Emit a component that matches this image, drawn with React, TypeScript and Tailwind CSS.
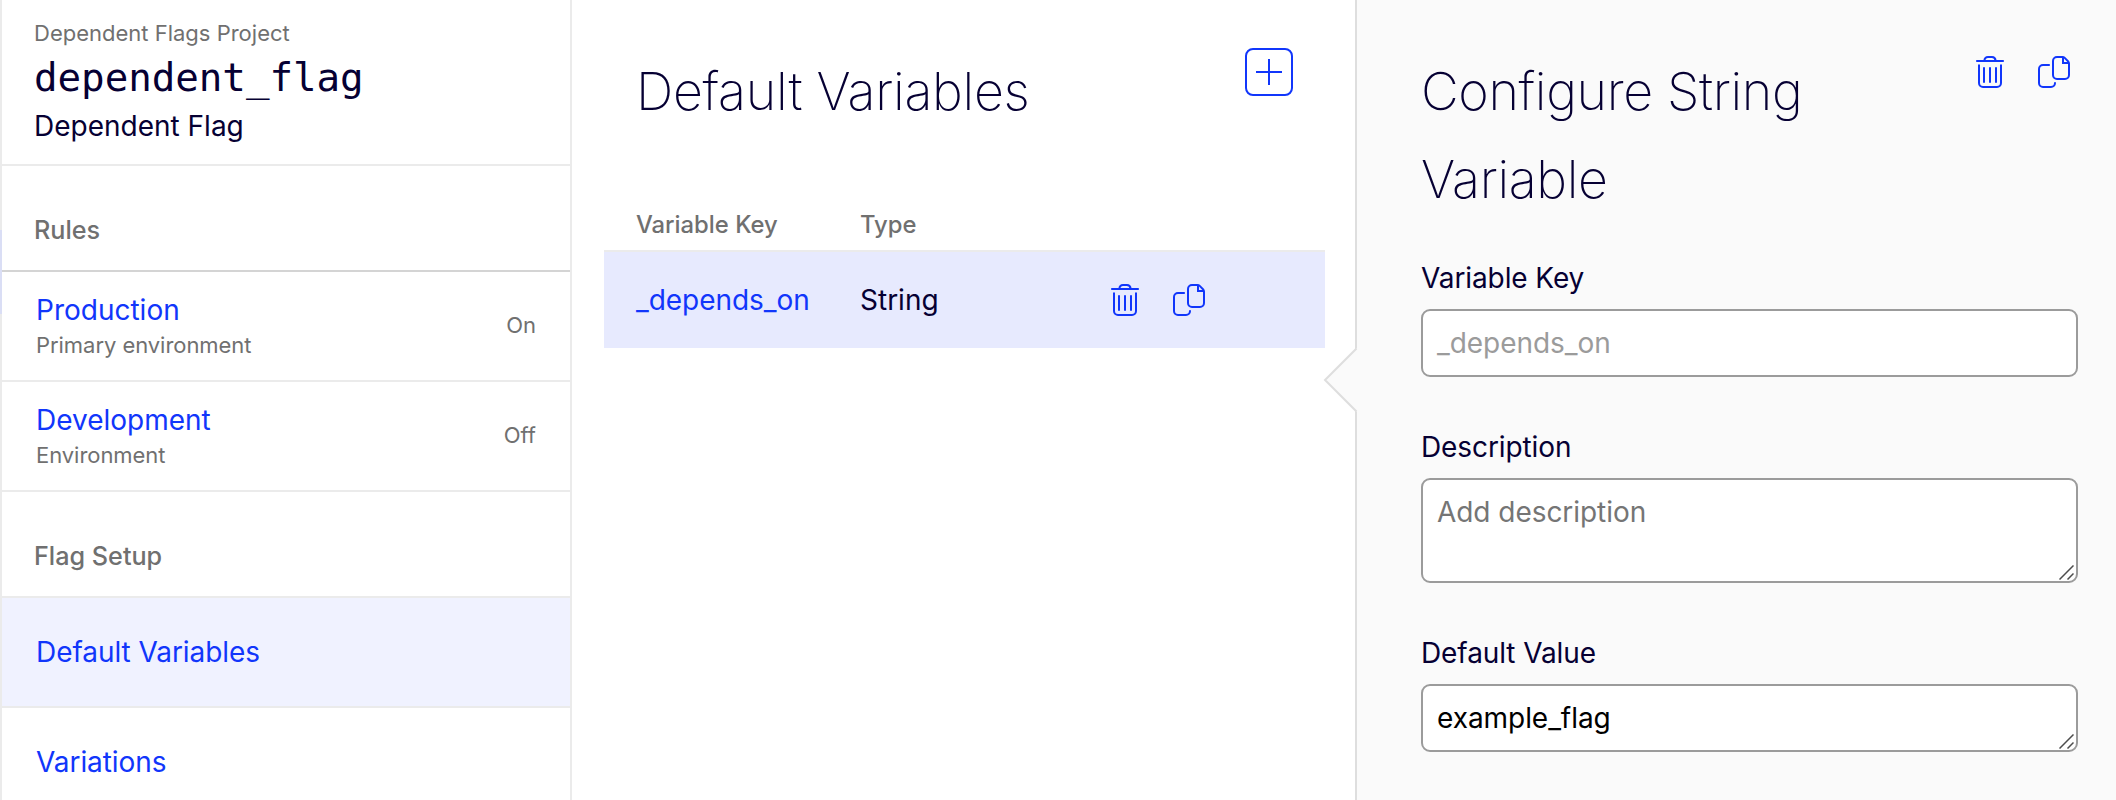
import type { ReactNode } from 'react'

function TrashIcon() {
  return (
    <svg width="32" height="32" viewBox="0 0 32 32" fill="none" stroke="currentColor" strokeWidth="2">
      <path d="M2.2 5H29.8" />
      <path d="M10.4 4.6C10.6 2.4 11.8 1 14 1h4c2.200 0 3.400 1.400 3.600 3.600" />
      <path d="M5 8.500V27a4 4 0 0 0 4 4H23a4 4 0 0 0 4-4V8.500" />
      <path d="M10 11.300V26.800M16 11.300V26.800M22 11.300V26.800" />
    </svg>
  )
}

function CopyIcon() {
  return (
    <svg width="32" height="32" viewBox="0 0 32 32" fill="none" stroke="currentColor" strokeWidth="2">
      <path d="M11.800 9H5a4 4 0 0 0-4 4V27a4 4 0 0 0 4 4H13a4 4 0 0 0 4-4v-.8" />
      <path d="M15 5a4 4 0 0 1 4-4h5.500c1 0 1.500.2 2.200.9L30 5.200c.8.800 1 1.300 1 2.300V19a4 4 0 0 1-4 4H19a4 4 0 0 1-4-4Z" />
      <path d="M25 1.200V7H30.800" />
    </svg>
  )
}

function ResizeGrip() {
  return (
    <svg className="absolute right-[2px] bottom-[1px]" width="15" height="15" viewBox="0 0 15 15" fill="none" stroke="#4d4d4d" strokeWidth="1.500">
      <path d="M.5 14.500 14.500.5M8.500 14.500 14.500 8.500" />
    </svg>
  )
}

function SectionTitle({ children }: { children: ReactNode }) {
  return (
    <div className="flex h-[104px] items-end pb-[19px] pl-8 text-[25.2px] leading-[41px] font-medium text-[#707070]">
      {children}
    </div>
  )
}

function EnvironmentRow({ name, kind, status }: { name: string; kind: string; status: string }) {
  return (
    <div className="flex h-[110px] items-center justify-between border-b-2 border-[#ebebeb] pr-[34px] pb-[2px] pl-[34px]">
      <div>
        <div className="text-[28px] leading-10 text-[#1136fb]">{name}</div>
        <div className="text-[22px] leading-[30px] tracking-[-0.05px] text-[#707070]">{kind}</div>
      </div>
      <div className="text-[22px] leading-8 text-[#707070]">{status}</div>
    </div>
  )
}

function Field({ label, children }: { label: string; children: ReactNode }) {
  return (
    <div>
      <div className="pb-[9px] text-[28px] leading-[44px] tracking-[-0.1px]">{label}</div>
      <div className="relative rounded-[9px] border-2 border-[#9b9b9b] bg-white pt-[10px] pl-[14px] text-[28px] leading-[44px] tracking-[-0.05px]">
        {children}
      </div>
    </div>
  )
}

export default function App() {
  return (
    <div className="flex h-[800px] w-[2116px] overflow-hidden bg-white font-['Inter',sans-serif] text-[#060033]">
      <div className="w-[2px] shrink-0 bg-[#ebebeb] pt-[230px]">
        <div className="h-[84px] bg-[#dadef5]" />
      </div>
      <aside className="w-[570px] shrink-0 border-r-2 border-[#ebebeb]">
        <header className="h-[166px] border-b-2 border-[#ebebeb] pt-[11px] pl-8">
          <div className="text-[22px] leading-[44px] text-[#707070]">Dependent Flags Project</div>
          <div className="font-['DejaVu_Sans_Mono',monospace] text-[39.2px] leading-[45px] tracking-[-0.05px]">dependent_flag</div>
          <div className="text-[28px] leading-[52px]">Dependent Flag</div>
        </header>
        <SectionTitle>Rules</SectionTitle>
        <div className="border-t-2 border-[#d4d4d4]">
          <EnvironmentRow name="Production" kind="Primary environment" status="On" />
          <EnvironmentRow name="Development" kind="Environment" status="Off" />
        </div>
        <SectionTitle>Flag Setup</SectionTitle>
        <div className="flex h-[112px] items-center border-y-2 border-[#ebebeb] bg-[#f0f2ff] pl-[34px] text-[28px] tracking-[-0.07px] text-[#1136fb]">
          Default Variables
        </div>
        <div className="flex h-[108px] items-center pl-[34px] text-[28px] tracking-[-0.07px] text-[#1136fb]">Variations</div>
      </aside>

      <main className="w-[783px] shrink-0 pl-8">
        <div className="flex h-[200px] items-start justify-between pt-[48px] pr-[62px] pl-8">
          <h1 className="text-[52px] leading-[88px] font-extralight tracking-[-0.3px]">Default Variables</h1>
          <button className="flex size-12 items-center justify-center rounded-[8px] border-2 border-[#1136fb] text-[#1136fb]">
            <svg width="26" height="26" viewBox="0 0 26 26" stroke="currentColor" strokeWidth="2">
              <path d="M13 0V26M0 13H26" />
            </svg>
          </button>
        </div>
        <div className="w-[721px]">
          <div className="grid h-[52px] grid-cols-[224px_1fr] border-b-2 border-[#ebebeb] pl-8 text-[23.8px] leading-[50px] font-medium text-[#707070]">
            <div>Variable Key</div>
            <div>Type</div>
          </div>
          <div className="grid h-24 grid-cols-[224px_249px_1fr] items-center bg-[#e7eafe] pl-8 text-[28px]">
            <div className="-mt-px tracking-[-0.05px] text-[#1136fb]">_depends_on</div>
            <div className="-mt-px">String</div>
            <div className="flex gap-8 text-[#1136fb]">
              <TrashIcon />
              <CopyIcon />
            </div>
          </div>
        </div>
      </main>

      <section className="relative flex-1 border-l-2 border-[#dedede] bg-[#fafafa] pt-[48px] pr-[38px] pl-[64px]">
        <svg className="absolute top-[346px] -left-[34px]" width="36" height="68" viewBox="0 0 36 68" fill="none">
          <path d="M36 2H34L2 34 34 66H36Z" fill="#fafafa" />
          <path d="M33.500 2.500 2 34 33.500 65.500" stroke="#dedede" strokeWidth="2" />
        </svg>
        <div className="flex items-start justify-between pr-[8px]">
          <h1 className="w-[440px] text-[52px] leading-[88px] font-extralight tracking-[-0.36px]">Configure String Variable</h1>
          <div className="flex gap-8 pt-2 text-[#1136fb]">
            <TrashIcon />
            <CopyIcon />
          </div>
        </div>
        <div className="flex flex-col gap-12 pt-8">
          <Field label="Variable Key">
            <div className="h-[54px] text-[#9b9b9b]">_depends_on</div>
          </Field>
          <Field label="Description">
            <div className="h-[91px] text-[#757575]">Add description</div>
            <ResizeGrip />
          </Field>
          <Field label="Default Value">
            <div className="h-[54px] text-black">example_flag</div>
            <ResizeGrip />
          </Field>
        </div>
      </section>
    </div>
  )
}
